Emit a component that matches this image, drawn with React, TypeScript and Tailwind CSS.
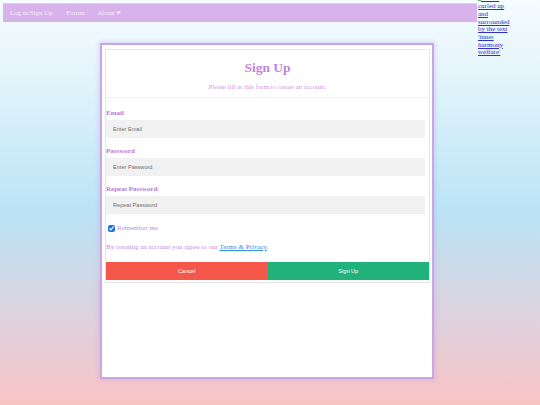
import React from "react";

const serif = { fontFamily: '"Liberation Serif", "Times New Roman", serif' };
const sans = { fontFamily: '"Liberation Sans", Arial, sans-serif' };

function Field({ label, placeholder, first }: { label: string; placeholder: string; first?: boolean }) {
  return (
    <div className={first ? "mt-[11px]" : "mt-[9px]"}>
      <div className="h-[8px] text-[7px] leading-[8px] font-bold text-[#b87ad6]" style={serif}>
        {label}
      </div>
      <div
        className="mt-[3px] mr-[4px] flex h-[18px] items-center bg-[#f1f1f1] pl-[7px] text-[5.6px] text-[#6f6f6f]"
        style={sans}
      >
        {placeholder}
      </div>
    </div>
  );
}

export default function App() {
  return (
    <div
      className="min-h-[405px] w-[540px] overflow-hidden bg-[linear-gradient(180deg,#f6fcff_0%,#e4f5fc_18%,#bae4f6_52%,#dcd2de_78%,#f9c3c5_100%)]"
      style={serif}
    >
      <div className="flex h-[22px] items-start">
        <div className="ml-[3px] mt-[3px] flex h-[19px] w-[474px] items-center border-t border-[#e4c9f1] bg-[#d8b2eb] text-[6.8px] text-[#f6eefa]">
          <span className="ml-[7px]">Log in/Sign Up</span>
          <span className="ml-[14px]">Forum</span>
          <span className="ml-[13px] flex items-center">
            About
            <svg width="5" height="4" viewBox="0 0 5 4" className="ml-[2px]">
              <path d="M0 0.5 L5 0.5 L2.5 3.5 Z" fill="#f6eefa" />
            </svg>
          </span>
        </div>
        <a
          href="#"
          className="ml-[1px] -mt-[4.6px] block w-[32px] text-[7px] leading-[7.7px] text-[#3030c8] underline"
          style={serif}
        >
          <span className="inline-block h-[5px] w-[3px] bg-[#5aa85a] align-middle"></span>flower curled up and surrounded by the text 'inner harmony welfare'
        </a>
      </div>

      <div className="ml-[100px] mt-[21px] h-[336px] w-[334px] border-2 border-[#cba5e4] bg-white pl-[3px] pt-[4px] shadow-[0_0_4px_1px_rgba(190,140,225,0.35)]">
        <div className="w-[325px] border border-[#e6e6e6] pb-[2px]">
          <div className="flex h-[48px] flex-col items-center border-b border-[#f0f0f0]">
            <div className="mt-[10px] h-[15px] text-[13.5px] font-bold leading-[15px] text-[#c283da]">Sign Up</div>
            <div className="mt-[8px] h-[8px] text-[6.8px] leading-[8px] text-[#cf98e0]">
              Please fill in this form to create an account.
            </div>
          </div>

          <Field label="Email" placeholder="Enter Email" first />
          <Field label="Password" placeholder="Enter Password" />
          <Field label="Repeat Password" placeholder="Repeat Password" />

          <div className="mt-[10px] flex h-[8px] items-center">
            <input
              type="checkbox"
              checked
              readOnly
              className="m-0 ml-[2px] h-[7px] w-[7px] accent-[#1a73e8]"
            />
            <span className="ml-[2px] text-[7px] leading-[8px] text-[#c68ddc]">Remember me</span>
          </div>

          <div className="mt-[11px] h-[8px] text-[7px] leading-[8px] text-[#c48cdc]">
            By creating an account you agree to our{" "}
            <a href="#" className="text-[#2f8ee5] underline">
              Terms &amp; Privacy
            </a>
            .
          </div>

          <div className="mt-[11px] flex h-[18px]" style={sans}>
            <div className="flex flex-1 items-center justify-center bg-[#f5574b] text-[5.6px] text-white">Cancel</div>
            <div className="flex flex-1 items-center justify-center bg-[#1fb27b] text-[5.6px] text-white">Sign Up</div>
          </div>
        </div>
      </div>
    </div>
  );
}
